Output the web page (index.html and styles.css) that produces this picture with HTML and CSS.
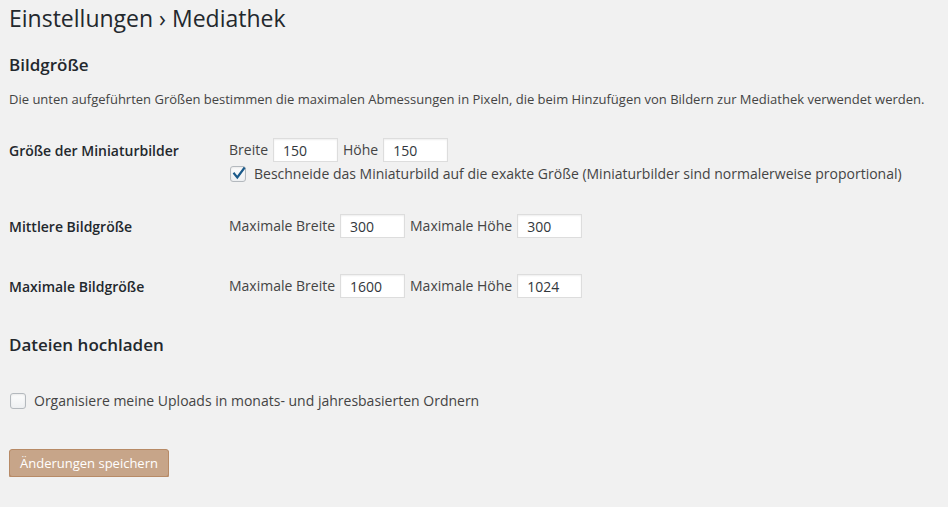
FILE: index.html
```html
<!DOCTYPE html>
<html lang="de">
<head>
<meta charset="utf-8">
<title>Einstellungen › Mediathek</title>
<link rel="stylesheet" href="styles.css">
</head>
<body>
<div class="wrap">
  <h1 class="title">Einstellungen › Mediathek</h1>
  <h2 class="section-title first">Bildgröße</h2>
  <p class="desc">Die unten aufgeführten Größen bestimmen die maximalen Abmessungen in Pixeln, die beim Hinzufügen von Bildern zur Mediathek verwendet werden.</p>

  <div class="form-row row-thumb">
    <div class="row-label">Größe der Miniaturbilder</div>
    <div class="row-field">
      <div class="line">
        <label class="field-label">Breite</label>
        <input class="num" type="text" value="150">
        <label class="field-label">Höhe</label>
        <input class="num" type="text" value="150">
      </div>
      <label class="check-line crop">
        <span class="checkbox checked">
          <svg viewBox="0 0 16 16" width="16" height="16"><path d="M3.2 7.6 L6.3 11.4 L13 2.4" fill="none" stroke="#1b5a8a" stroke-width="2.2" stroke-linecap="square"/></svg>
        </span>
        <span>Beschneide das Miniaturbild auf die exakte Größe (Miniaturbilder sind normalerweise proportional)</span>
      </label>
    </div>
  </div>

  <div class="form-row row-medium">
    <div class="row-label">Mittlere Bildgröße</div>
    <div class="row-field">
      <div class="line">
        <label class="field-label">Maximale Breite</label>
        <input class="num" type="text" value="300">
        <label class="field-label">Maximale Höhe</label>
        <input class="num" type="text" value="300">
      </div>
    </div>
  </div>

  <div class="form-row row-large">
    <div class="row-label">Maximale Bildgröße</div>
    <div class="row-field">
      <div class="line">
        <label class="field-label">Maximale Breite</label>
        <input class="num" type="text" value="1600">
        <label class="field-label">Maximale Höhe</label>
        <input class="num" type="text" value="1024">
      </div>
    </div>
  </div>

  <h2 class="section-title uploads">Dateien hochladen</h2>

  <label class="check-line organize">
    <span class="checkbox"></span>
    <span>Organisiere meine Uploads in monats- und jahresbasierten Ordnern</span>
  </label>

  <div class="submit">
    <button class="button-primary" type="button">Änderungen speichern</button>
  </div>
</div>
</body>
</html>
```

FILE: styles.css
```css
html, body {
  margin: 0;
  padding: 0;
  background: #f1f1f1;
}
body {
  font-family: "Open Sans", "Noto Sans", sans-serif;
  color: #444;
  font-size: 14px;
}
.wrap {
  padding: 0 9px;
}
.title {
  margin: 0;
  padding-top: 4px;
  font-size: 23px;
  font-weight: 400;
  line-height: 29px;
  color: #23282d;
}
.section-title {
  margin: 0;
  font-size: 17px;
  font-weight: 600;
  line-height: 22px;
  color: #23282d;
}
.section-title.first {
  margin-top: 21px;
}
.desc {
  margin: 14px 0 0;
  font-size: 13px;
  line-height: 18px;
}
.form-row {
  display: flex;
  align-items: flex-start;
}
.row-thumb { margin-top: 30px; }
.row-medium { margin-top: 31px; }
.row-large { margin-top: 34px; }
.row-label {
  width: 220px;
  flex: none;
  font-weight: 600;
  color: #23282d;
  line-height: 26px;
}
.row-field {
  display: flex;
  flex-direction: column;
}
.line {
  display: flex;
  align-items: center;
  gap: 5px;
  height: 24px;
}
.field-label {
  line-height: 24px;
}
.num {
  box-sizing: border-box;
  width: 65px;
  height: 24px;
  margin: 0;
  padding: 0 0 0 9px;
  border: 1px solid #ddd;
  background: #fff;
  box-shadow: inset 0 1px 2px rgba(0,0,0,.07);
  font-family: inherit;
  font-size: 14px;
  color: #32373c;
  outline: none;
}
.check-line {
  display: flex;
  align-items: center;
  gap: 8px;
  line-height: 19px;
}
.crop {
  margin-top: 2px;
  margin-left: 1px;
}
.checkbox {
  box-sizing: border-box;
  width: 16px;
  height: 16px;
  flex: none;
  border: 1px solid #b4b9be;
  border-radius: 3px;
  background: linear-gradient(#fdfdfd, #eef0f2);
  box-shadow: inset 0 1px 2px rgba(0,0,0,.08);
  position: relative;
}
.checkbox svg {
  position: absolute;
  left: 0;
  top: -1px;
}
.uploads {
  margin-top: 34px;
}
.organize {
  margin-top: 35px;
  margin-left: 1px;
}
.submit {
  margin-top: 39px;
}
.button-primary {
  box-sizing: border-box;
  width: 160px;
  height: 28px;
  margin: 0;
  padding: 0 10px 2px;
  border: 1px solid #b78a66;
  border-radius: 3px;
  background: #c7a589;
  box-shadow: 0 1px 0 #b78a66;
  color: #fff;
  font-family: inherit;
  font-size: 13px;
  line-height: 26px;
}
```
